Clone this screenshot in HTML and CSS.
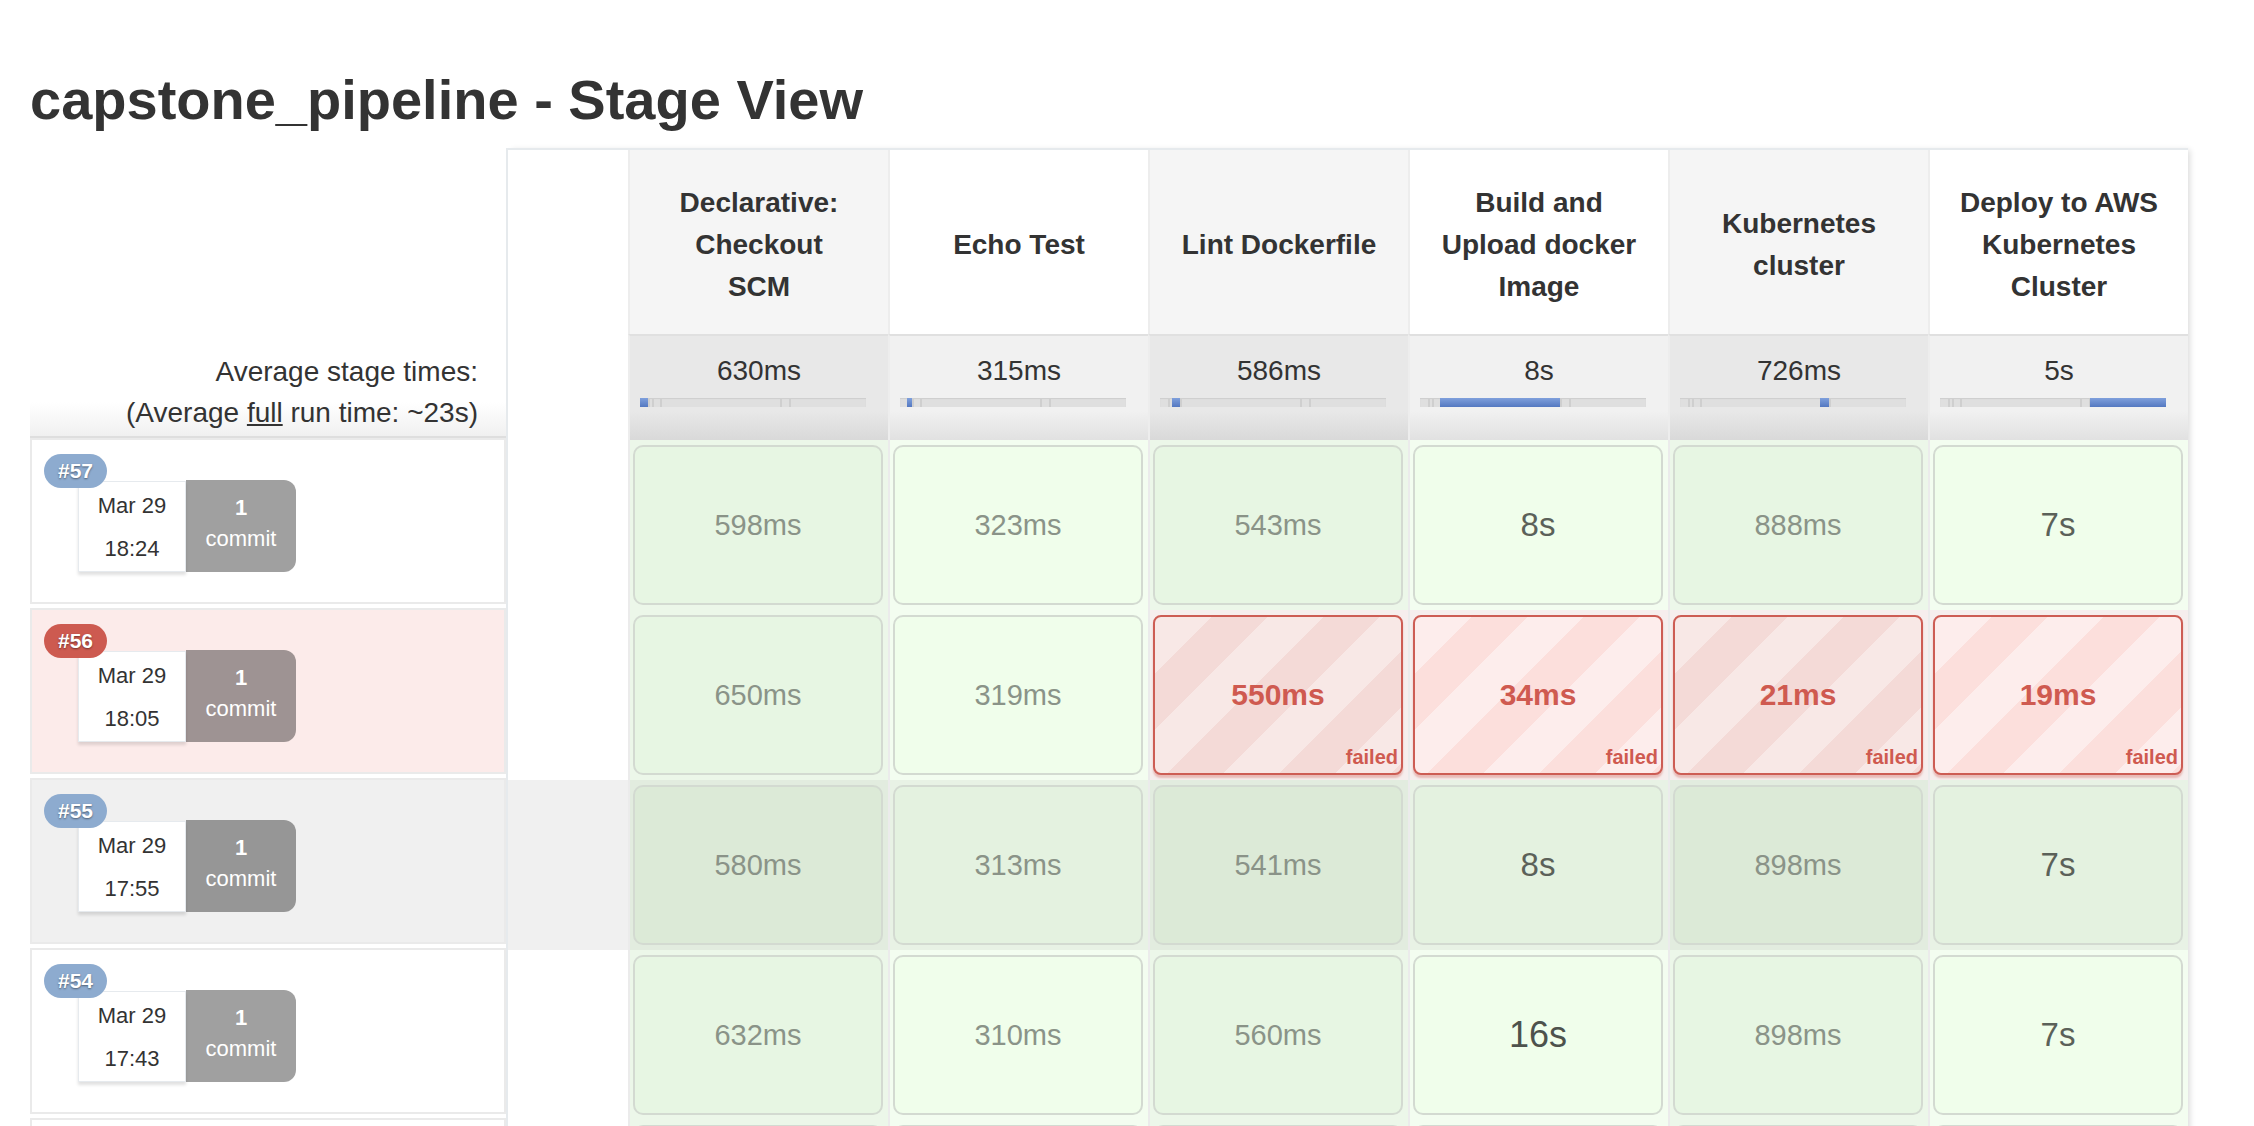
FILE: index.html
```html
<!DOCTYPE html>
<html>
<head>
<meta charset="utf-8">
<title>capstone_pipeline - Stage View</title>
<link rel="stylesheet" href="styles.css">
</head>
<body>
<div class="page">
  <h1 class="title">capstone_pipeline - Stage View</h1>
  <div class="stage-view">
    <div class="jobs">
      <div class="jobs-head">
        <div class="avg-label">Average stage times:<br>(Average <u>full</u> run time: ~23s)</div>
      </div>
      <div class="job">
        <span class="badge">#57</span>
        <div class="job-meta"><div class="date">Mar 29<br>18:24</div><div class="commits"><b>1</b><br>commit</div></div>
      </div>
      <div class="job job-failed">
        <span class="badge badge-red">#56</span>
        <div class="job-meta"><div class="date">Mar 29<br>18:05</div><div class="commits"><b>1</b><br>commit</div></div>
      </div>
      <div class="job job-hl">
        <span class="badge">#55</span>
        <div class="job-meta"><div class="date">Mar 29<br>17:55</div><div class="commits"><b>1</b><br>commit</div></div>
      </div>
      <div class="job">
        <span class="badge">#54</span>
        <div class="job-meta"><div class="date">Mar 29<br>17:43</div><div class="commits"><b>1</b><br>commit</div></div>
      </div>
      <div class="job"></div>
    </div>

    <div class="grid">
      <!-- header -->
      <div class="e"></div>
      <div class="h odd">Declarative:<br>Checkout<br>SCM</div>
      <div class="h even">Echo Test</div>
      <div class="h odd">Lint Dockerfile</div>
      <div class="h even">Build and<br>Upload docker<br>Image</div>
      <div class="h odd">Kubernetes<br>cluster</div>
      <div class="h even">Deploy to AWS<br>Kubernetes<br>Cluster</div>

      <!-- averages -->
      <div class="e"></div>
      <div class="a odd"><div class="a-time">630ms</div><div class="bar"><i class="tick" style="left:8px"></i><i class="tick" style="left:12px"></i><i class="tick" style="left:20px"></i><i class="tick" style="left:140px"></i><i class="tick" style="left:149px"></i><span class="fill" style="left:0;width:8px"></span></div></div>
      <div class="a even"><div class="a-time">315ms</div><div class="bar"><i class="tick" style="left:8px"></i><i class="tick" style="left:12px"></i><i class="tick" style="left:20px"></i><i class="tick" style="left:140px"></i><i class="tick" style="left:149px"></i><span class="fill" style="left:7px;width:5px"></span></div></div>
      <div class="a odd"><div class="a-time">586ms</div><div class="bar"><i class="tick" style="left:8px"></i><i class="tick" style="left:12px"></i><i class="tick" style="left:20px"></i><i class="tick" style="left:140px"></i><i class="tick" style="left:149px"></i><span class="fill" style="left:12px;width:8px"></span></div></div>
      <div class="a even"><div class="a-time">8s</div><div class="bar"><i class="tick" style="left:8px"></i><i class="tick" style="left:12px"></i><i class="tick" style="left:20px"></i><i class="tick" style="left:140px"></i><i class="tick" style="left:149px"></i><span class="fill" style="left:20px;width:120px"></span></div></div>
      <div class="a odd"><div class="a-time">726ms</div><div class="bar"><i class="tick" style="left:8px"></i><i class="tick" style="left:12px"></i><i class="tick" style="left:20px"></i><i class="tick" style="left:140px"></i><i class="tick" style="left:149px"></i><span class="fill" style="left:140px;width:9px"></span></div></div>
      <div class="a even"><div class="a-time">5s</div><div class="bar"><i class="tick" style="left:8px"></i><i class="tick" style="left:12px"></i><i class="tick" style="left:20px"></i><i class="tick" style="left:140px"></i><i class="tick" style="left:149px"></i><span class="fill" style="left:150px;width:76px"></span></div></div>

      <!-- #57 -->
      <div class="e"></div>
      <div class="s odd"><div class="box">598ms</div></div>
      <div class="s even"><div class="box">323ms</div></div>
      <div class="s odd"><div class="box">543ms</div></div>
      <div class="s even"><div class="box sec">8s</div></div>
      <div class="s odd"><div class="box">888ms</div></div>
      <div class="s even"><div class="box sec">7s</div></div>

      <!-- #56 -->
      <div class="e"></div>
      <div class="s odd"><div class="box">650ms</div></div>
      <div class="s even"><div class="box">319ms</div></div>
      <div class="s odd fail"><div class="box">550ms<span class="failed">failed</span></div></div>
      <div class="s even fail"><div class="box">34ms<span class="failed">failed</span></div></div>
      <div class="s odd fail"><div class="box">21ms<span class="failed">failed</span></div></div>
      <div class="s even fail"><div class="box">19ms<span class="failed">failed</span></div></div>

      <!-- #55 -->
      <div class="e hl"></div>
      <div class="s odd hl"><div class="box">580ms</div></div>
      <div class="s even hl"><div class="box">313ms</div></div>
      <div class="s odd hl"><div class="box">541ms</div></div>
      <div class="s even hl"><div class="box sec">8s</div></div>
      <div class="s odd hl"><div class="box">898ms</div></div>
      <div class="s even hl"><div class="box sec">7s</div></div>

      <!-- #54 -->
      <div class="e"></div>
      <div class="s odd"><div class="box">632ms</div></div>
      <div class="s even"><div class="box">310ms</div></div>
      <div class="s odd"><div class="box">560ms</div></div>
      <div class="s even"><div class="box sec big">16s</div></div>
      <div class="s odd"><div class="box">898ms</div></div>
      <div class="s even"><div class="box sec">7s</div></div>

      <!-- next row (cut off) -->
      <div class="e"></div>
      <div class="s odd"><div class="box"></div></div>
      <div class="s even"><div class="box"></div></div>
      <div class="s odd"><div class="box"></div></div>
      <div class="s even"><div class="box"></div></div>
      <div class="s odd"><div class="box"></div></div>
      <div class="s even"><div class="box"></div></div>
    </div>
  </div>
</div>
</body>
</html>
```

FILE: styles.css
```css
html, body {
  margin: 0;
  padding: 0;
  background: #fff;
  overflow: hidden;
}

body {
  font-family: "Liberation Sans", Arial, Helvetica, sans-serif;
  color: #333;
}

.page {
  padding: 70px 0 0 30px;
}

.title {
  margin: 0;
  font-size: 56px;
  line-height: 60px;
  font-weight: bold;
  color: #333;
}

.stage-view {
  display: flex;
  align-items: flex-start;
  margin-top: 18px;
}

/* ---------- left job column ---------- */
.jobs {
  width: 476px;
  flex: none;
}

.jobs-head {
  height: 290px;
  box-sizing: border-box;
  display: flex;
  align-items: flex-end;
  border-bottom: 2px solid #DEDEDE;
}

.avg-label {
  flex: 1;
  height: 96px;
  box-sizing: border-box;
  padding: 11px 28px 0 0;
  text-align: right;
  font-size: 28px;
  line-height: 41px;
  color: #333;
  background: linear-gradient(#fff 65%, #F0F0F0);
}

.job {
  height: 166px;
  box-sizing: border-box;
  border: 2px solid #EAEAEA;
  margin-bottom: 4px;
  padding: 14px 0 0 12px;
  display: flex;
  flex-direction: column;
  align-items: flex-start;
  background: #fff;
}

.job-failed {
  background: #FCEBEA;
}

.job-hl {
  background: #F0F0F0;
}

.badge {
  position: relative;
  z-index: 1;
  display: block;
  height: 34px;
  line-height: 34px;
  padding: 0 14px;
  border-radius: 17px;
  background: #8DABCF;
  color: #fff;
  font-weight: bold;
  font-size: 21px;
  text-shadow: 0 1px 2px rgba(0, 0, 0, 0.45);
}

.badge-red {
  background: #CD5A50;
}

.job-meta {
  display: flex;
  align-items: flex-start;
  margin: -7px 0 0 34px;
}

.date {
  width: 108px;
  height: 91px;
  box-sizing: border-box;
  padding-top: 2px;
  background: #fff;
  border: 1px solid #E6EAEE;
  box-shadow: 0 3px 3px rgba(0, 0, 0, 0.12);
  text-align: center;
  font-size: 22px;
  line-height: 43px;
  color: #333;
}

.commits {
  width: 110px;
  height: 92px;
  margin-top: -1px;
  box-sizing: border-box;
  padding-top: 12px;
  background: rgba(0, 0, 0, 0.373);
  color: #fff;
  border-radius: 0 12px 12px 0;
  text-align: center;
  font-size: 22px;
  line-height: 31px;
}

/* ---------- stage grid ---------- */
.grid {
  display: grid;
  grid-template-columns: 120px repeat(6, 260px);
  grid-template-rows: 184px 106px repeat(5, 170px);
  border-top: 2px solid #E6EAED;
  border-left: 2px solid #E6EAED;
  box-shadow: 4px 0 6px -2px rgba(0, 0, 0, 0.14);
  flex: none;
}

.e {
  background: #fff;
}

.e.hl {
  background: #F0F0F0;
}

.h {
  display: flex;
  align-items: center;
  justify-content: center;
  padding-top: 6px;
  text-align: center;
  white-space: nowrap;
  font-weight: bold;
  font-size: 28px;
  line-height: 42px;
  color: #333;
  border-left: 2px solid #EDEDED;
}

.h.odd { background: #F5F5F5; }
.h.even { background: #fff; }

.a {
  border-left: 2px solid #EDEDED;
  border-top: 2px solid #E0E0E0;
  padding-top: 18px;
}

.a.odd { background: linear-gradient(#E8E8E8 72%, #D9D9D9); }
.a.even { background: linear-gradient(#F1F1F1 72%, #E1E1E1); }

.a-time {
  text-align: center;
  font-size: 28px;
  line-height: 34px;
  color: #333;
}

.bar {
  position: relative;
  width: 226px;
  height: 9px;
  margin: 10px 0 0 10px;
  background: #DFDFDF;
  box-shadow: inset 0 1px 1px rgba(0, 0, 0, 0.08);
}

.tick {
  position: absolute;
  top: 0;
  bottom: 0;
  width: 2px;
  background: #CFCFCF;
}

.fill {
  position: absolute;
  top: 0;
  bottom: 0;
  background: linear-gradient(#7FA0DC, #5478C1);
}

.s {
  border-left: 2px solid #EBEBEB;
  padding: 5px 5px 5px 3px;
}

.s.odd { background: #ECF7E9; }
.s.even { background: #F3FDF0; }
.s.hl.odd { background: #E2ECDF; }
.s.hl.even { background: #E8F2E5; }
.s.fail { background: #F6EEED; }

.box {
  position: relative;
  height: 160px;
  box-sizing: border-box;
  border: 2px solid #D3DAD1;
  border-radius: 10px;
  display: flex;
  align-items: center;
  justify-content: center;
  font-size: 29px;
  color: #8A9388;
}

.s.odd .box { background: #E7F6E3; }
.s.even .box { background: #F0FEEB; }
.s.hl.odd .box { background: #DCEAD7; }
.s.hl.even .box { background: #E4F2E0; }

.box.sec {
  font-size: 33px;
  color: #5B6159;
}

.box.big {
  font-size: 36px;
  color: #4D524C;
}

.s.fail .box {
  border-color: #CD5D54;
  border-radius: 8px;
  box-shadow: 0 3px 2px rgba(205, 93, 84, 0.35);
  color: #CF5A50;
  font-size: 30px;
  font-weight: bold;
  background-size: 112px 112px;
}

.s.fail.odd .box {
  background-color: #F4DAD7;
  background-image: linear-gradient(135deg, rgba(255,255,255,.38) 25%, transparent 25%, transparent 50%, rgba(255,255,255,.38) 50%, rgba(255,255,255,.38) 75%, transparent 75%, transparent);
}

.s.fail.even .box {
  background-color: #FCDFDC;
  background-image: linear-gradient(135deg, rgba(255,255,255,.45) 25%, transparent 25%, transparent 50%, rgba(255,255,255,.45) 50%, rgba(255,255,255,.45) 75%, transparent 75%, transparent);
}

.failed {
  position: absolute;
  right: 3px;
  bottom: 5px;
  font-size: 20px;
  line-height: 22px;
  font-weight: bold;
  color: #CF5A50;
}
```
